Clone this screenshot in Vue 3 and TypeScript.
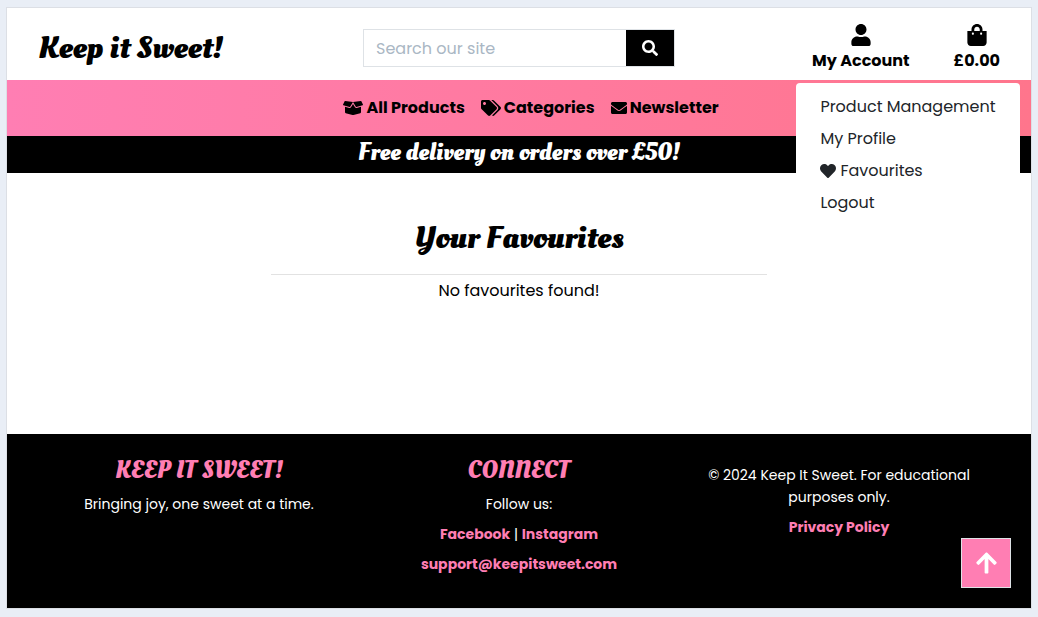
<script setup lang="ts">
import { ref } from 'vue'

interface Icon {
  box: string
  path: string
}

interface NavLink {
  label: string
  icon: Icon
  wide: boolean
}

const icons: Record<string, Icon> = {
  user: {
    box: '0 0 448 512',
    path: 'M224 256c70.7 0 128-57.3 128-128S294.7 0 224 0 96 57.3 96 128s57.3 128 128 128zm89.6 32h-16.7c-22.2 10.2-46.9 16-72.9 16s-50.6-5.8-72.9-16h-16.7C60.2 288 0 348.2 0 422.4V464c0 26.5 21.5 48 48 48h352c26.5 0 48-21.5 48-48v-41.6c0-74.2-60.2-134.4-134.4-134.4z',
  },
  bag: {
    box: '0 0 448 512',
    path: 'M352 160v-32C352 57.42 294.579 0 224 0 153.42 0 96 57.42 96 128v32H0v272c0 44.183 35.817 80 80 80h288c44.183 0 80-35.817 80-80V160h-96zm-192-32c0-35.29 28.71-64 64-64s64 28.71 64 64v32H160v-32zm160 120c-13.255 0-24-10.745-24-24s10.745-24 24-24 24 10.745 24 24-10.745 24-24 24zm-192 0c-13.255 0-24-10.745-24-24s10.745-24 24-24 24 10.745 24 24-10.745 24-24 24z',
  },
  search: {
    box: '0 0 512 512',
    path: 'M505 442.7L405.3 343c-4.5-4.5-10.6-7-17-7H372c27.6-35.3 44-79.7 44-128C416 93.1 322.9 0 208 0S0 93.1 0 208s93.1 208 208 208c48.3 0 92.7-16.4 128-44v16.3c0 6.4 2.5 12.5 7 17l99.7 99.7c9.4 9.4 24.6 9.4 33.9 0l28.3-28.3c9.4-9.4 9.4-24.6.1-34zM208 336c-70.7 0-128-57.2-128-128 0-70.7 57.2-128 128-128 70.7 0 128 57.2 128 128 0 70.7-57.2 128-128 128z',
  },
  boxOpen: {
    box: '0 0 640 512',
    path: 'M425.7 256c-16.9 0-32.8-9-41.4-23.4L320 126l-64.2 106.6c-8.7 14.5-24.6 23.5-41.5 23.5-4.5 0-9-.6-13.3-1.9L64 215v178c0 14.7 10 27.5 24.2 31l216.2 54.1c10.2 2.5 20.9 2.5 31 0L551.8 424c14.2-3.6 24.2-16.4 24.2-31V215l-137 39.1c-4.3 1.3-8.8 1.9-13.3 1.9zm212.6-112.2L586.8 41c-3.1-6.2-9.8-9.8-16.7-8.9L320 64l91.7 152.1c3.8 6.3 11.4 9.3 18.5 7.3l197.9-56.5c9.9-2.9 14.7-13.9 10.2-23.1zM53.2 41L1.7 143.8c-4.6 9.2.3 20.2 10.1 23l197.9 56.5c7.1 2 14.7-1 18.5-7.3L320 64 69.8 32.1c-6.9-.8-13.5 2.7-16.6 8.9z',
  },
  tags: {
    box: '0 0 640 512',
    path: 'M497.941 225.941L286.059 14.059A48 48 0 0 0 252.118 0H48C21.49 0 0 21.49 0 48v204.118a48 48 0 0 0 14.059 33.941l211.882 211.882c18.744 18.745 49.136 18.746 67.882 0l204.118-204.118c18.745-18.745 18.745-49.137 0-67.882zM112 160c-26.51 0-48-21.49-48-48s21.49-48 48-48 48 21.49 48 48-21.49 48-48 48zm513.941 133.823L421.823 497.941c-18.745 18.745-49.137 18.745-67.882 0l-.36-.36L527.64 323.522c16.999-16.999 26.362-39.6 26.362-63.64s-9.362-46.641-26.362-63.64L331.397 0h48.721a48 48 0 0 1 33.941 14.059l211.882 211.882c18.745 18.745 18.745 49.137 0 67.882z',
  },
  envelope: {
    box: '0 0 512 512',
    path: 'M502.3 190.8c3.9-3.1 9.7-.2 9.7 4.7V400c0 26.5-21.5 48-48 48H48c-26.5 0-48-21.5-48-48V195.6c0-5 5.7-7.8 9.7-4.7 22.4 17.4 52.1 39.5 154.1 113.6 21.1 15.4 56.7 47.8 92.2 47.6 35.7.3 72-32.8 92.3-47.6 102-74.1 131.6-96.3 154-113.7zM256 320c23.2.4 56.6-29.2 73.4-41.4 132.7-96.3 142.8-104.7 173.4-128.7 5.8-4.5 9.2-11.5 9.2-18.9v-19c0-26.5-21.5-48-48-48H48c-26.5 0-48 21.5-48 48v19c0 7.4 3.4 14.3 9.2 18.9 30.6 23.9 40.7 32.4 173.4 128.7 16.8 12.2 50.2 41.8 73.4 41.4z',
  },
  heart: {
    box: '0 0 512 512',
    path: 'M462.3 62.6C407.5 15.9 326 24.3 275.7 76.2L256 96.5l-19.7-20.3C186.1 24.3 104.5 15.9 49.7 62.6c-62.8 53.6-66.1 149.8-9.9 207.9l193.5 199.8c12.5 12.9 32.8 12.9 45.3 0l193.5-199.8c56.3-58.1 53-154.3-9.8-207.9z',
  },
  arrowUp: {
    box: '0 0 448 512',
    path: 'M34.9 289.5l-22.2-22.2c-9.4-9.4-9.4-24.6 0-33.9L207 39c9.4-9.4 24.6-9.4 33.9 0l194.3 194.3c9.4 9.4 9.4 24.6 0 33.9L413 289.4c-9.5 9.5-25 9.3-34.3-.4L264 168.6V456c0 13.3-10.7 24-24 24h-32c-13.3 0-24-10.7-24-24V168.6L69.2 289.1c-9.3 9.8-24.8 10-34.3.4z',
  },
}

const navLinks: NavLink[] = [
  { label: 'All Products', icon: icons.boxOpen, wide: true },
  { label: 'Categories', icon: icons.tags, wide: true },
  { label: 'Newsletter', icon: icons.envelope, wide: false },
]

const query = ref('')
const menuOpen = ref(true)

function toTop(): void {
  window.scrollTo({ top: 0, behavior: 'smooth' })
}
</script>

<template>
  <div class="page">
    <div class="site">
      <header class="header">
        <a class="brand" href="#">Keep it Sweet!</a>
        <form class="search" role="search" @submit.prevent>
          <input v-model="query" type="text" placeholder="Search our site" aria-label="Search our site" />
          <button type="submit" aria-label="Search">
            <svg :viewBox="icons.search.box"><path :d="icons.search.path" /></svg>
          </button>
        </form>
        <div class="tools">
          <div class="account">
            <button class="tool" type="button" :aria-expanded="menuOpen" @click="menuOpen = !menuOpen">
              <svg :viewBox="icons.user.box"><path :d="icons.user.path" /></svg>
              <span>My Account</span>
            </button>
            <div v-if="menuOpen" class="menu">
              <a href="#">Product Management</a>
              <a href="#">My Profile</a>
              <a href="#"><svg :viewBox="icons.heart.box"><path :d="icons.heart.path" /></svg>Favourites</a>
              <a href="#">Logout</a>
            </div>
          </div>
          <a class="tool" href="#">
            <svg :viewBox="icons.bag.box"><path :d="icons.bag.path" /></svg>
            <span>£0.00</span>
          </a>
        </div>
      </header>

      <nav class="nav">
        <a v-for="link in navLinks" :key="link.label" href="#">
          <svg :class="{ wide: link.wide }" :viewBox="link.icon.box"><path :d="link.icon.path" /></svg>
          <span>{{ link.label }}</span>
        </a>
      </nav>

      <div class="banner">Free delivery on orders over £50!</div>

      <main class="main">
        <h1>Your Favourites</h1>
        <hr />
        <p>No favourites found!</p>
      </main>

      <footer class="footer">
        <section>
          <h2>KEEP IT SWEET!</h2>
          <p>Bringing joy, one sweet at a time.</p>
        </section>
        <section>
          <h2>CONNECT</h2>
          <p>Follow us:</p>
          <p><a href="#">Facebook</a> | <a href="#">Instagram</a></p>
          <p><a href="mailto:support@keepitsweet.com">support@keepitsweet.com</a></p>
        </section>
        <section class="legal">
          <p>© 2024 Keep It Sweet. For educational purposes only.</p>
          <p><a href="#">Privacy Policy</a></p>
        </section>
      </footer>

      <button class="to-top" type="button" aria-label="Back to top" @click="toTop">
        <svg :viewBox="icons.arrowUp.box"><path :d="icons.arrowUp.path" /></svg>
      </button>
    </div>
  </div>
</template>

<style>
body {
  margin: 0;
  background: #e9eef6;
}
</style>

<style scoped>
.page {
  --display: "Oleo Script", "Liberation Serif", serif;
  --pink: #ff7eb3;
  box-sizing: border-box;
  min-height: 100vh;
  padding: 7px 6px 8px;
  display: flex;
  font: 16px/24px Poppins, Inter, sans-serif;
  color: #000;
}

.page * {
  box-sizing: border-box;
}

.site {
  position: relative;
  flex: 1;
  display: flex;
  flex-direction: column;
  border: 1px solid #dcdfe5;
  background: #fff;
}

a {
  color: inherit;
  text-decoration: none;
}

button,
input {
  font: inherit;
  color: inherit;
}

button {
  padding: 0;
  border: 0;
  background: none;
  cursor: pointer;
}

svg {
  width: 16px;
  height: 16px;
  fill: currentColor;
}

.header {
  height: 72px;
  padding: 8px 31px 0;
  display: grid;
  grid-template-columns: 1fr 312px 1fr;
  align-items: center;
}

.brand {
  font: bold 32px/38px var(--display);
}

.search {
  height: 38px;
  display: flex;
  border: 1px solid #dee2e6;
}

.search input {
  flex: 1;
  min-width: 0;
  padding: 1px 12px 0;
  border: 0;
  outline: 0;
  background: #fff;
}

.search input::placeholder {
  color: #aab7c4;
  opacity: 1;
}

.search button {
  width: 48px;
  display: grid;
  place-items: center;
  background: #000;
  color: #fff;
}

.tools {
  display: flex;
  justify-content: flex-end;
  gap: 44px;
}

.account {
  position: relative;
}

.tool {
  display: flex;
  flex-direction: column;
  align-items: center;
  gap: 3px;
  font-weight: 700;
}

.tool svg {
  width: 20px;
  height: 22px;
}

.menu {
  position: absolute;
  top: 59px;
  right: -110px;
  z-index: 2;
  padding: 8px 0;
  border-radius: 4px;
  background: #fff;
  color: #212529;
}

.menu a {
  display: flex;
  align-items: center;
  gap: 4px;
  padding: 4px 24px;
  white-space: nowrap;
}

.nav {
  height: 56px;
  display: flex;
  align-items: center;
  justify-content: center;
  gap: 16px;
  padding-left: 24px;
  background: linear-gradient(to right, #ff7eb3, #ff758c);
  font-weight: 700;
}

.nav a {
  display: flex;
  align-items: center;
  gap: 3px;
}

.nav svg {
  margin-bottom: 1px;
}

.nav .wide {
  width: 20px;
}

.banner {
  padding: 1px 16px 4px;
  background: #000;
  color: #fff;
  text-align: center;
  font: bold 24px/32px var(--display);
}

.main {
  flex: 1;
  padding: 45px 264px 0;
  text-align: center;
}

h1 {
  margin: 0;
  font: bold 32px/40px var(--display);
}

hr {
  height: 1px;
  margin: 16px 0 4px;
  border: 0;
  background: #e2e2e2;
}

.main p {
  margin: 0;
}

.footer {
  min-height: 174px;
  padding: 21px 32px 15px;
  display: grid;
  grid-template-columns: repeat(3, 1fr);
  background: #000;
  color: #fff;
  text-align: center;
  font-size: 14px;
  line-height: 22px;
}

.footer h2 {
  margin: 0 0 6px;
  color: var(--pink);
  font: bold 24px/32px var(--display);
}

.footer section {
  padding: 0 16px;
}

.footer p {
  margin: 0 0 8px;
}

.footer a {
  color: var(--pink);
  font-weight: 700;
}

.footer .legal {
  padding-top: 9px;
}

.to-top {
  position: absolute;
  right: 20px;
  bottom: 20px;
  width: 50px;
  height: 50px;
  display: grid;
  place-items: center;
  border: 1px solid #dee2e6;
  background: var(--pink);
  color: #fff;
}

.to-top svg {
  width: 21px;
  height: 24px;
}
</style>
